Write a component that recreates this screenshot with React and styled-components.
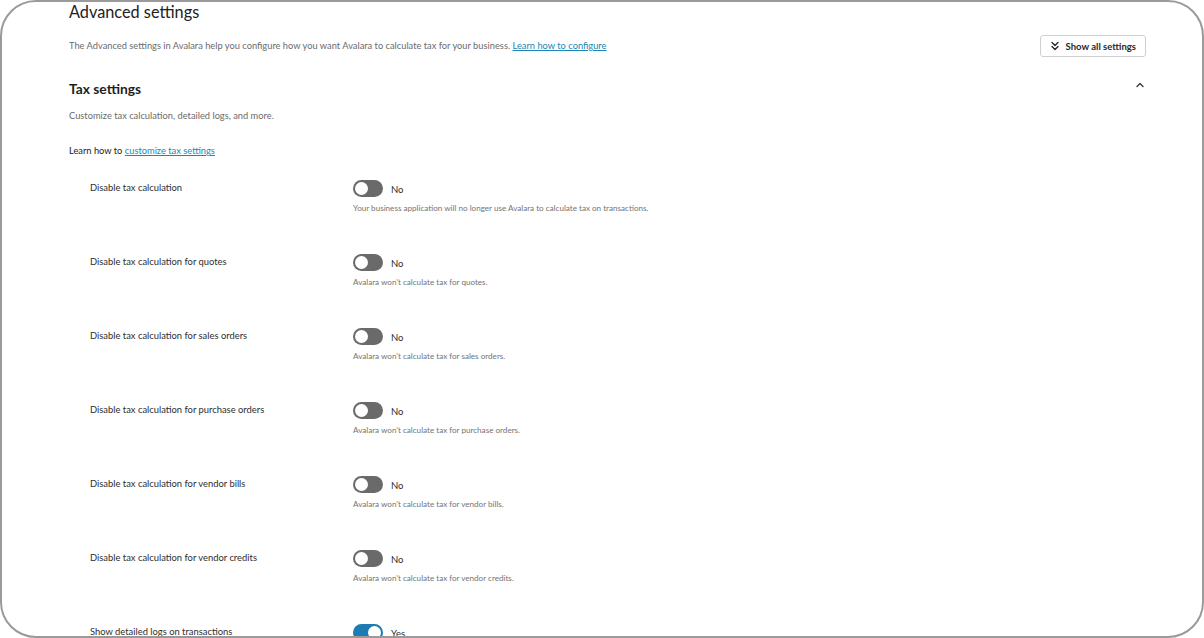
import React from "react";
import styled, { createGlobalStyle } from "styled-components";

const GlobalStyle = createGlobalStyle`
  html, body {
    margin: 0;
    padding: 0;
    background: #ffffff;
  }
  body {
    font-family: Lato, "Open Sans", "Liberation Sans", sans-serif;
    color: #1f1f1f;
  }
`;

const Frame = styled.div`
  box-sizing: border-box;
  width: 1204px;
  height: 638px;
  border: 2px solid #9a9a9a;
  border-radius: 36px;
  overflow: hidden;
  background: #fff;
`;

const Content = styled.div`
  padding: 0 56px 0 67px;
`;

const Title = styled.h1`
  margin: 0;
  font-size: 16.3px;
  line-height: 20px;
  font-weight: 400;
  color: #222;
`;

const IntroRow = styled.div`
  display: flex;
  align-items: center;
  justify-content: space-between;
  margin-top: 13px;
`;

const Muted = styled.p`
  margin: 0;
  font-size: 9.3px;
  line-height: 14px;
  color: #6b6b6b;
`;

const Link = styled.a`
  color: #1b86b5;
  text-decoration: underline;
  cursor: pointer;
`;

const GhostButton = styled.button`
  display: flex;
  align-items: center;
  gap: 5px;
  height: 22px;
  padding: 0 9px 0 8px;
  font-family: inherit;
  font-size: 9.5px;
  font-weight: 700;
  color: #2a2a2a;
  background: #fff;
  border: 1px solid #cfcfcf;
  border-radius: 3px;
  cursor: pointer;
`;

const SectionHead = styled.div`
  display: flex;
  align-items: center;
  justify-content: space-between;
  margin-top: 23px;
`;

const SectionTitle = styled.h2`
  margin: 0;
  font-size: 13.8px;
  line-height: 18px;
  font-weight: 700;
  color: #1f1f1f;
`;

const Collapse = styled.button`
  display: flex;
  padding: 0;
  margin: -8px 0 0 0;
  border: none;
  background: none;
  color: #333;
  cursor: pointer;
`;

const SectionSub = styled(Muted)`
  margin-top: 11px;
`;

const LearnLine = styled.p`
  margin: 21px 0 0;
  font-size: 9.3px;
  line-height: 14px;
  color: #222;
`;

const SettingsList = styled.div`
  display: flex;
  flex-direction: column;
  padding-left: 21px;
  margin-top: 22px;
`;

const SettingRow = styled.div`
  display: grid;
  grid-template-columns: 263px 1fr;
  height: 74px;
`;

const Label = styled.div`
  font-size: 9.4px;
  line-height: 16px;
  color: #2e2e2e;
`;

const Control = styled.div`
  display: flex;
  flex-direction: column;
  gap: 5px;
`;

const ToggleLine = styled.div`
  display: flex;
  align-items: center;
  gap: 8px;
  height: 17px;
`;

const Track = styled.span`
  position: relative;
  box-sizing: border-box;
  width: 30px;
  height: 17px;
  border-radius: 9px;
  background: ${(p) => (p.on ? "#1d7db2" : "#6a6a6a")};
  flex: none;
`;

const Knob = styled.span`
  position: absolute;
  top: 2px;
  left: ${(p) => (p.on ? "15px" : "2px")};
  width: 13px;
  height: 13px;
  border-radius: 50%;
  background: #fff;
`;

const State = styled.span`
  font-size: 9.5px;
  line-height: 14px;
  color: #2e2e2e;
  padding-top: 2px;
`;

const Hint = styled.div`
  font-size: 8.1px;
  line-height: 12px;
  color: #747474;
`;

const ChevronsDown = () => (
  <svg width="12" height="12" viewBox="0 0 24 24" fill="none" stroke="currentColor" strokeWidth="2.8" strokeLinecap="round" strokeLinejoin="round">
    <path d="m6 5 6 6 6-6" />
    <path d="m6 13 6 6 6-6" />
  </svg>
);

const ChevronUp = () => (
  <svg width="12" height="12" viewBox="0 0 24 24" fill="none" stroke="currentColor" strokeWidth="2.6" strokeLinecap="round" strokeLinejoin="round">
    <path d="m18 15-6-6-6 6" />
  </svg>
);

const settings = [
  { label: "Disable tax calculation", on: false, hint: "Your business application will no longer use Avalara to calculate tax on transactions." },
  { label: "Disable tax calculation for quotes", on: false, hint: "Avalara won't calculate tax for quotes." },
  { label: "Disable tax calculation for sales orders", on: false, hint: "Avalara won't calculate tax for sales orders." },
  { label: "Disable tax calculation for purchase orders", on: false, hint: "Avalara won't calculate tax for purchase orders." },
  { label: "Disable tax calculation for vendor bills", on: false, hint: "Avalara won't calculate tax for vendor bills." },
  { label: "Disable tax calculation for vendor credits", on: false, hint: "Avalara won't calculate tax for vendor credits." },
  { label: "Show detailed logs on transactions", on: true, hint: "Avalara will keep detailed logs for each transaction." },
];

function Toggle({ on }) {
  return (
    <ToggleLine>
      <Track on={on ? 1 : 0}>
        <Knob on={on ? 1 : 0} />
      </Track>
      <State>{on ? "Yes" : "No"}</State>
    </ToggleLine>
  );
}

export default function App() {
  return (
    <>
      <GlobalStyle />
      <Frame>
        <Content>
          <Title>Advanced settings</Title>
          <IntroRow>
            <Muted>
              The Advanced settings in Avalara help you configure how you want Avalara to calculate tax for your business.{" "}
              <Link>Learn how to configure</Link>
            </Muted>
            <GhostButton>
              <ChevronsDown />
              Show all settings
            </GhostButton>
          </IntroRow>

          <SectionHead>
            <SectionTitle>Tax settings</SectionTitle>
            <Collapse aria-label="Collapse">
              <ChevronUp />
            </Collapse>
          </SectionHead>
          <SectionSub>Customize tax calculation, detailed logs, and more.</SectionSub>
          <LearnLine>
            Learn how to <Link>customize tax settings</Link>
          </LearnLine>

          <SettingsList>
            {settings.map((s) => (
              <SettingRow key={s.label}>
                <Label>{s.label}</Label>
                <Control>
                  <Toggle on={s.on} />
                  <Hint>{s.hint}</Hint>
                </Control>
              </SettingRow>
            ))}
          </SettingsList>
        </Content>
      </Frame>
    </>
  );
}
